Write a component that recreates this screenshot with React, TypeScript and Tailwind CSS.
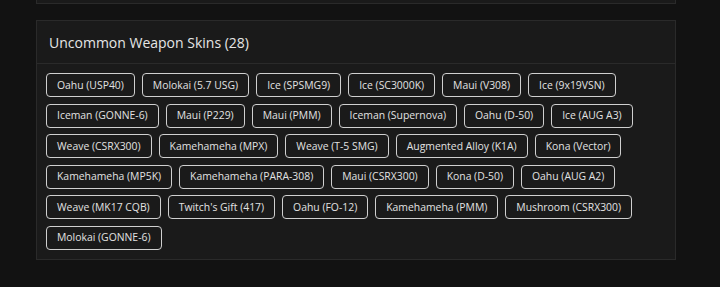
const skins = [
  "Oahu (USP40)",
  "Molokai (5.7 USG)",
  "Ice (SPSMG9)",
  "Ice (SC3000K)",
  "Maui (V308)",
  "Ice (9x19VSN)",
  "Iceman (GONNE-6)",
  "Maui (P229)",
  "Maui (PMM)",
  "Iceman (Supernova)",
  "Oahu (D-50)",
  "Ice (AUG A3)",
  "Weave (CSRX300)",
  "Kamehameha (MPX)",
  "Weave (T-5 SMG)",
  "Augmented Alloy (K1A)",
  "Kona (Vector)",
  "Kamehameha (MP5K)",
  "Kamehameha (PARA-308)",
  "Maui (CSRX300)",
  "Kona (D-50)",
  "Oahu (AUG A2)",
  "Weave (MK17 CQB)",
  "Twitch's Gift (417)",
  "Oahu (FO-12)",
  "Kamehameha (PMM)",
  "Mushroom (CSRX300)",
  "Molokai (GONNE-6)",
];

export default function App() {
  return (
    <div className="min-h-[287px] w-[720px] bg-[#121212] pl-[36px] font-['Open_Sans',sans-serif]">
      <div className="h-[4px] w-[640px] border-x border-b border-[#2a2a2a] bg-[#1a1a1a]" />
      <section className="mt-[16px] w-[640px] border border-[#2a2a2a] bg-[#1a1a1a]">
        <div className="flex h-[43px] items-center border-b border-[#2a2a2a] px-3">
          <h2 className="text-[14px] font-medium text-[#e6e6e6]">Uncommon Weapon Skins (28)</h2>
        </div>
        <div className="flex flex-wrap gap-x-[7px] gap-y-[6.5px] p-[9px]">
          {skins.map((s) => (
            <span
              key={s}
              className="flex h-[24px] items-center rounded-[4px] border border-[#cfcfcf] px-[10px] text-[10.4px] leading-none text-[#e2e2e2]"
            >
              {s}
            </span>
          ))}
        </div>
      </section>
    </div>
  );
}
